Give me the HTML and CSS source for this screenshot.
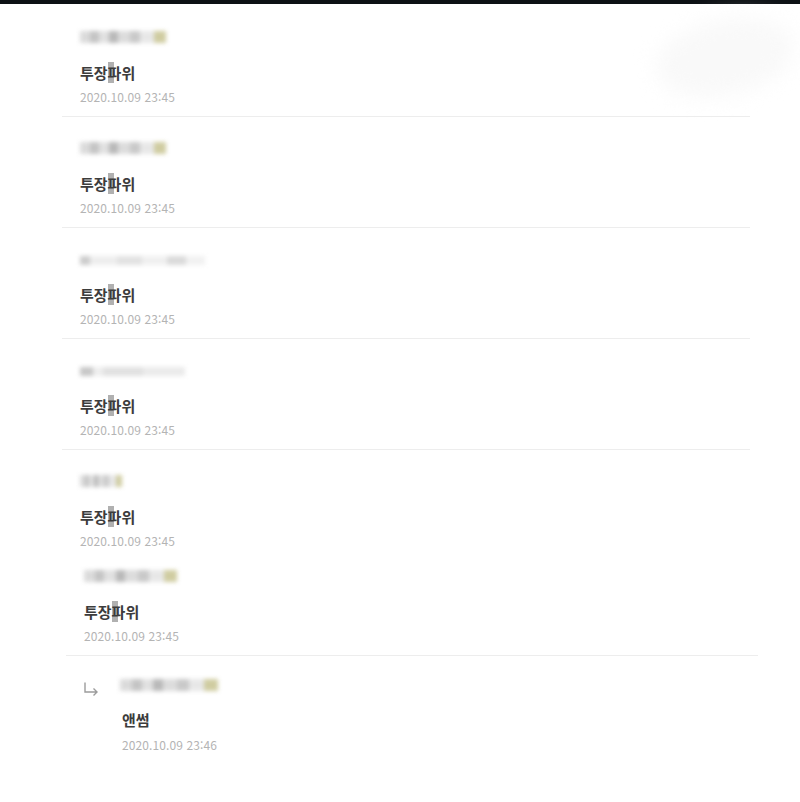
FILE: index.html
```html
<!DOCTYPE html>
<html lang="ko">

<head>
  <meta charset="UTF-8" />
  <title>댓글</title>
  <link rel="stylesheet" href="styles.css">
</head>

<body>
  <div class="topbar"></div>
  <div class="smudge"></div>

  <div class="comments">
    <div class="comment first">
      <div class="mask mask-a"></div>
      <p class="text">투장<span class="pix">파</span>위</p>
      <p class="date">2020.10.09 23:45</p>
    </div>
    <div class="comment">
      <div class="mask mask-a"></div>
      <p class="text">투장<span class="pix">파</span>위</p>
      <p class="date">2020.10.09 23:45</p>
    </div>
    <div class="comment">
      <div class="mask mask-b"></div>
      <p class="text">투장<span class="pix">파</span>위</p>
      <p class="date">2020.10.09 23:45</p>
    </div>
    <div class="comment">
      <div class="mask mask-c"></div>
      <p class="text">투장<span class="pix">파</span>위</p>
      <p class="date">2020.10.09 23:45</p>
    </div>
    <div class="comment no-line">
      <div class="mask mask-d"></div>
      <p class="text">투장<span class="pix">파</span>위</p>
      <p class="date">2020.10.09 23:45</p>
    </div>
  </div>

  <div class="comments shifted">
    <div class="comment tight">
      <div class="mask mask-e"></div>
      <p class="text">투장<span class="pix">파</span>위</p>
      <p class="date">2020.10.09 23:45</p>
    </div>
    <div class="reply">
      <svg class="reply-arrow" width="18" height="16" viewBox="0 0 18 16">
        <path d="M3 1.5 V11 H15 M11.5 7.5 L15 11 L11.5 14.5" fill="none" stroke="#9c9c9c" stroke-width="1.4" />
      </svg>
      <div class="reply-body">
        <div class="mask mask-f"></div>
        <p class="text">앤썸</p>
        <p class="date">2020.10.09 23:46</p>
      </div>
    </div>
  </div>
</body>

</html>
```

FILE: styles.css
```css
html,
body {
  margin: 0;
  padding: 0;
  background-color: #ffffff;
  font-family: 'Noto Sans CJK KR', 'Noto Sans', sans-serif;
  overflow: hidden;
}

.topbar {
  height: 4px;
  background-color: #0d1115;
}

.smudge {
  position: absolute;
  top: 20px;
  left: 655px;
  width: 140px;
  height: 75px;
  border-radius: 50%;
  background-color: #f9f9f9;
  filter: blur(10px);
  transform: rotate(-12deg);
  pointer-events: none;
}

.comments {
  margin-left: 62px;
  width: 688px;
  position: relative;
}

.comments.shifted {
  margin-left: 66px;
  width: 692px;
}

.comment {
  padding: 25px 0 11px 18px;
  border-bottom: 1px solid #ededed;
}

.comment.first {
  padding-top: 27px;
}

.comment.no-line {
  border-bottom: none;
  padding-bottom: 0;
}

.comment.tight {
  padding-top: 21px;
  padding-bottom: 11px;
}

.text {
  margin: 20px 0 0;
  font-size: 15px;
  line-height: 20px;
  font-weight: 700;
  color: #3c3c3c;
}

.pix {
  background: linear-gradient(90deg, rgba(150, 150, 150, 0.75) 0 45%, transparent 45%);
}

.date {
  margin: 6px 0 0;
  font-size: 12px;
  line-height: 16px;
  color: #b4b4b4;
  letter-spacing: 0.1px;
}

/* blurred nicknames */
.mask {
  height: 12px;
  filter: blur(2px);
  opacity: 0.8;
  background:
    linear-gradient(90deg,
      #d2d2d2 0 12%, #b6b6b6 12% 22%, #dadada 22% 34%,
      #a8a8a8 34% 44%, #d4d4d4 44% 58%, #bcbcbc 58% 70%,
      #e2e2e2 70% 86%, #c4c08a 86% 100%);
}

.mask-a {
  width: 86px;
}

.mask-b {
  width: 125px;
  height: 9px;
  margin-top: 3px;
  opacity: 0.5;
  background:
    linear-gradient(90deg,
      #9a9a9a 0 8%, #dcdcdc 8% 30%, #c5c5c5 30% 50%,
      #e0e0e0 50% 70%, #b5b5b5 70% 85%, #e4e4e4 85% 100%);
}

.mask-c {
  width: 105px;
  height: 9px;
  margin-top: 3px;
  opacity: 0.55;
  background:
    linear-gradient(90deg,
      #9a9a9a 0 12%, #e0e0e0 12% 22%, #c8c8c8 22% 60%,
      #dadada 60% 100%);
}

.mask-d {
  width: 42px;
}

.mask-e {
  width: 93px;
}

.mask-f {
  width: 98px;
  margin-top: -6px;
}

.reply {
  display: flex;
  padding: 29px 0 0 16px;
}

.reply-arrow {
  margin-top: -4px;
  margin-right: 20px;
  flex: none;
}

.reply-body .text {
  margin-left: 2px;
  margin-top: 19px;
}

.reply-body .date {
  margin-left: 2px;
  margin-top: 7px;
}
```
